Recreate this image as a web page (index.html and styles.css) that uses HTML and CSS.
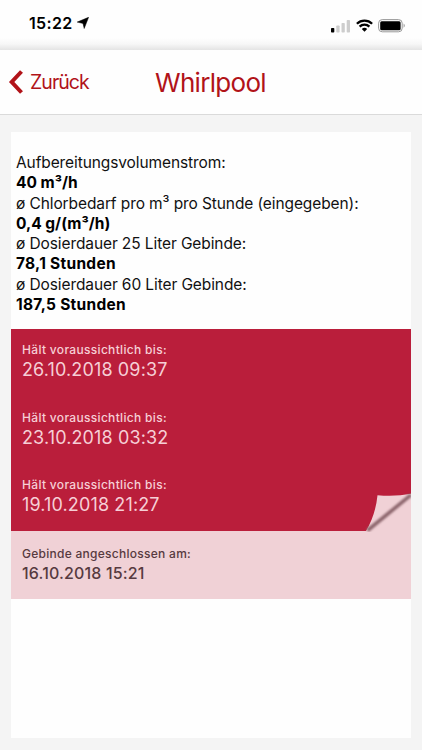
FILE: index.html
```html
<!DOCTYPE html>
<html lang="de">
<head>
<meta charset="utf-8">
<title>Whirlpool</title>
<link rel="stylesheet" href="styles.css">
</head>
<body>
<div class="status">
  <span class="time">15:22</span>
  <svg class="location" width="12" height="12" viewBox="0 0 12 12"><path d="M11.6.3 7.2 11.5 6 6.4.2 5.1Z" stroke="#000" stroke-width=".5" stroke-linejoin="round"/></svg>
  <svg class="signal" width="20" height="13" viewBox="0 0 20 13"><rect x="0" y="8" width="3.3" height="4.5" rx=".8"/><g fill="#cdcdcd"><rect x="5.3" y="5.5" width="3.3" height="7" rx=".8"/><rect x="10.5" y="3" width="3.3" height="9.5" rx=".8"/><rect x="15.7" y="0" width="3.3" height="12.5" rx=".8"/></g></svg>
  <svg class="wifi" width="17" height="13" viewBox="0 0 17 13"><g fill="none" stroke="#000" stroke-width="2.3"><path d="M.9 4.7A10.8 10.8 0 0 1 16.1 4.7"/><path d="M3.6 7.6A7 7 0 0 1 13.4 7.6"/></g><path d="M8.5 12.7 5.8 10A3.8 3.8 0 0 1 11.2 10Z"/></svg>
  <svg class="battery" width="28" height="14" viewBox="0 0 28 14"><rect x=".6" y=".6" width="23.6" height="12.2" rx="3.6" fill="none" stroke="#999" stroke-width="1"/><rect x="2.2" y="2.2" width="20.4" height="9" rx="1.5"/><path d="M25.6 4.6Q28 6.7 25.6 8.8Z" fill="#999"/></svg>
</div>
<header class="nav">
  <div class="back">
    <svg width="15" height="24" viewBox="0 0 15 24"><path d="M13.500 1.5 3.700 12 13.500 22.5" fill="none" stroke="#b11319" stroke-width="4"/></svg>
    <span class="back-label">Zurück</span>
  </div>
  <h1 class="title">Whirlpool</h1>
</header>
<main class="content">
  <section class="card">
    <div class="facts">
      <div>Aufbereitungsvolumenstrom:</div>
      <div><b class="unit">40 m³/h</b></div>
      <div>ø Chlorbedarf pro m³ pro Stunde (eingegeben):</div>
      <div><b class="unit">0,4 g/(m³/h)</b></div>
      <div>ø Dosierdauer 25 Liter Gebinde:</div>
      <div><b>78,1 Stunden</b></div>
      <div>ø Dosierdauer 60 Liter Gebinde:</div>
      <div><b>187,5 Stunden</b></div>
    </div>
    <div class="forecast">
      <div class="entry"><div class="label">Hält voraussichtlich bis:</div><div class="date">26.10.2018 09:37</div></div>
      <div class="entry"><div class="label">Hält voraussichtlich bis:</div><div class="date">23.10.2018 03:32</div></div>
      <div class="entry"><div class="label">Hält voraussichtlich bis:</div><div class="date">19.10.2018 21:27</div></div>
      <svg class="curl" width="46" height="39" viewBox="0 0 46 39">
        <defs><filter id="soft" x="-20%" y="-20%" width="140%" height="140%"><feGaussianBlur stdDeviation=".9"/></filter></defs>
        <path d="M1 38Q10.500 22 12.500 2.200Q30 3.800 46 .8V39H1Z" fill="#f0d1d6"/>
        <path d="M2.500 37.500 46 1.800" stroke="#8b656c" stroke-width="3.600" filter="url(#soft)"/>
      </svg>
    </div>
    <div class="connected">
      <div class="label">Gebinde angeschlossen am:</div><div class="date">16.10.2018 15:21</div>
    </div>
  </section>
</main>
</body>
</html>
```
FILE: styles.css
```css
* { box-sizing: border-box; }
body {
  margin: 0;
  width: 422px;
  height: 750px;
  overflow: hidden;
  display: flex;
  flex-direction: column;
  background: #f4f4f4;
  font-family: Inter, "Liberation Sans", sans-serif;
  color: #111;
}
svg { display: block; flex: none; }
.status {
  height: 50px;
  display: flex;
  align-items: flex-start;
  padding: 13px 16px 0 29px;
  background: linear-gradient(#fefefe 38px, #f7f7f7 44px, #e4e4e4 50px);
}
.time { font-size: 16px; line-height: 20px; font-weight: 600; letter-spacing: 0.35px; width: 48px; color: #000; }
.location { margin-top: 4px; }
.signal { margin: 7px 5px 0 auto; }
.wifi { margin: 6px 5px 0 0; }
.battery { margin-top: 6px; }
.nav {
  height: 65px;
  flex: none;
  display: flex;
  align-items: center;
  background: #fefefe;
  border-bottom: 1px solid #dadada;
  color: #b11319;
}
.back { display: flex; align-items: center; width: 155px; padding-left: 8px; gap: 7px; }
.back-label { font-size: 19.5px; line-height: 24px; letter-spacing: -0.95px; }
.title { margin: 2px 0 0; font-size: 26px; line-height: 32px; font-weight: 400; letter-spacing: -0.7px; }
.content { flex: 1; padding: 17px 11px 12px; }
.card { height: 606px; background: #fefefe; }
.facts { height: 197px; padding: 21px 5px 0; font-size: 15.5px; line-height: 20.25px; letter-spacing: -0.1px; white-space: nowrap; }
.facts b { font-weight: 700; letter-spacing: 0.28px; color: #000; }
.facts .unit { letter-spacing: 0; }
.forecast { position: relative; height: 202px; padding-top: 13px; background: #ba1e3b; color: #f6cfd6; }
.entry { height: 67.5px; padding-left: 11px; }
.label { font-size: 12px; line-height: 16px; font-weight: 500; letter-spacing: 0.32px; }
.date { font-size: 18px; line-height: 24.5px; letter-spacing: 0.13px; }
.curl { position: absolute; right: 0; bottom: -1px; }
.connected { height: 68px; padding: 15px 0 0 11px; background: #f0d1d6; color: #573a40; }
.connected .label { letter-spacing: 0.27px; }
.connected .date { font-size: 16px; line-height: 22px; font-weight: 500; letter-spacing: 0.16px; }
```
